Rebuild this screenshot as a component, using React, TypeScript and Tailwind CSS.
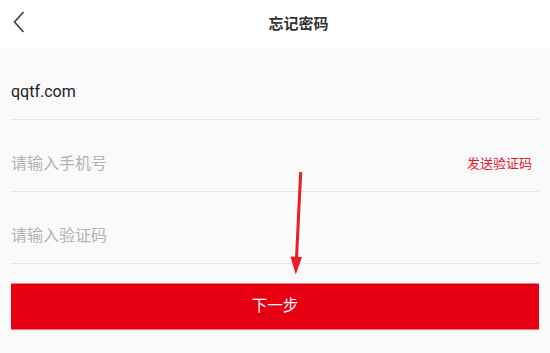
import React from 'react'

const font = { fontFamily: 'Roboto, "Noto Sans CJK SC", sans-serif' }

function Row({ children }: { children: React.ReactNode }) {
  return (
    <div className="h-[72px] flex items-end justify-between pb-[18px] border-b border-[#e6e6e6]">
      {children}
    </div>
  )
}

export default function App() {
  return (
    <div className="relative w-[550px] h-[353px] bg-[#fafafa] overflow-hidden" style={font}>
      {/* header */}
      <div className="h-[47px] bg-white flex items-center">
        <svg className="ml-[13px] -mt-[3px]" width="12" height="23" viewBox="0 0 12 23" fill="none">
          <polyline points="10.5,1 1.5,11 10.5,21" stroke="#444" strokeWidth="1.7" />
        </svg>
        <div className="flex-1 text-center pl-[22px] text-[15px] font-bold text-[#333] leading-[20px]">
          忘记密码
        </div>
      </div>

      {/* form */}
      <div className="px-[11px] pt-px">
        <Row>
          <span className="text-[16px] leading-[18px] text-[#222]">qqtf.com</span>
        </Row>
        <Row>
          <span className="text-[16px] leading-[18px] text-[#b3b3b3]">请输入手机号</span>
          <span className="text-[13px] leading-[18px] text-[#e8152e] pr-[7px]">发送验证码</span>
        </Row>
        <Row>
          <span className="text-[16px] leading-[18px] text-[#b3b3b3]">请输入验证码</span>
        </Row>
        <button className="mt-[19px] w-full h-[47px] bg-[#e60012] text-white text-[15.5px] flex items-center justify-center border-y border-[#f07a85]">
          下一步
        </button>
      </div>

      {/* annotation arrow */}
      <svg className="absolute left-0 top-0 pointer-events-none" width="550" height="353">
        <line x1="300.7" y1="172" x2="296.4" y2="260" stroke="#ea1c28" strokeWidth="3" />
        <polygon points="290.5,256.5 302,257 295.8,274.5" fill="#ea1c28" />
      </svg>
    </div>
  )
}
